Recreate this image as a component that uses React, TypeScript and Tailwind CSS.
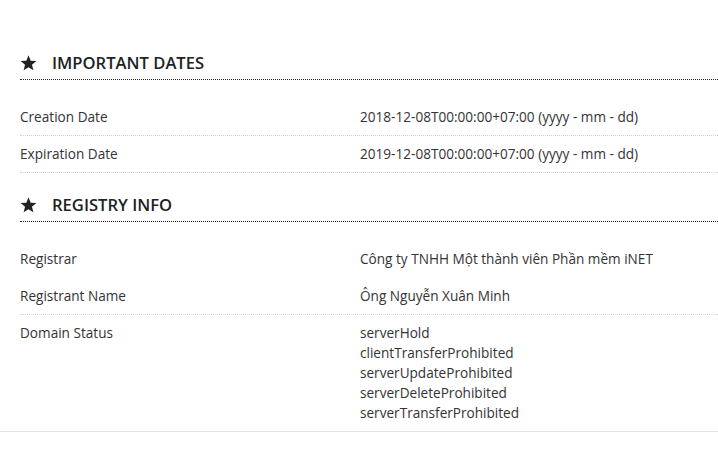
import React from 'react';

type Row = { label: string; values: string[]; border?: 'dotted' | 'none' };

const dates: Row[] = [
    { label: 'Creation Date', values: ['2018-12-08T00:00:00+07:00 (yyyy - mm - dd)'] },
    { label: 'Expiration Date', values: ['2019-12-08T00:00:00+07:00 (yyyy - mm - dd)'] },
];

const registry: Row[] = [
    { label: 'Registrar', values: ['Công ty TNHH Một thành viên Phần mềm iNET'], border: 'none' },
    { label: 'Registrant Name', values: ['Ông Nguyễn Xuân Minh'] },
    {
        label: 'Domain Status',
        values: [
            'serverHold',
            'clientTransferProhibited',
            'serverUpdateProhibited',
            'serverDeleteProhibited',
            'serverTransferProhibited',
        ],
        border: 'none',
    },
];

const Star = () => (
    <svg width="17" height="16" viewBox="0 0 24 23" className="shrink-0">
        <path d="M12 0.5l3.1 7.6 8.2 0.6-6.3 5.3 2 8-7-4.4-7 4.4 2-8L0.7 8.7l8.2-0.6z" fill="#222" />
    </svg>
);

const Heading: React.FC<{ title: string; className: string }> = ({ title, className }) => (
    <div className={`flex items-center gap-[15px] pb-[4px] border-b border-dotted border-[#222] ${className}`}>
        <Star />
        <h2 className="text-[16.6px] leading-[24px] font-semibold uppercase text-[#222]">{title}</h2>
    </div>
);

const Rows: React.FC<{ rows: Row[] }> = ({ rows }) => (
    <div className="mt-[19px]">
        {rows.map((row) => (
            <div
                key={row.label}
                className={`grid grid-cols-[340px_1fr] pt-[8px] border-b ${
                    row.border === 'none' ? 'border-transparent' : 'border-dotted border-[#d4d4d4]'
                } ${row.label === 'Domain Status' ? 'pb-[7px]' : 'pb-[8px]'}`}
            >
                <div>{row.label}</div>
                <div className="flex flex-col">
                    {row.values.map((v) => (
                        <span key={v}>{v}</span>
                    ))}
                </div>
            </div>
        ))}
    </div>
);

const App: React.FC = () => {
    return (
        <div className="min-h-screen bg-white" style={{ fontFamily: '"Open Sans", "Noto Sans", sans-serif' }}>
            <div className="border-b border-[#e3e3e3] pt-[51px] text-[13.6px] leading-[20px] text-[#333]">
                <div className="pl-[20px]">
                    <Heading title="Important Dates" className="" />
                    <Rows rows={dates} />
                    <Heading title="Registry Info" className="mt-[20px]" />
                    <Rows rows={registry} />
                </div>
            </div>
        </div>
    );
};

export default App;
